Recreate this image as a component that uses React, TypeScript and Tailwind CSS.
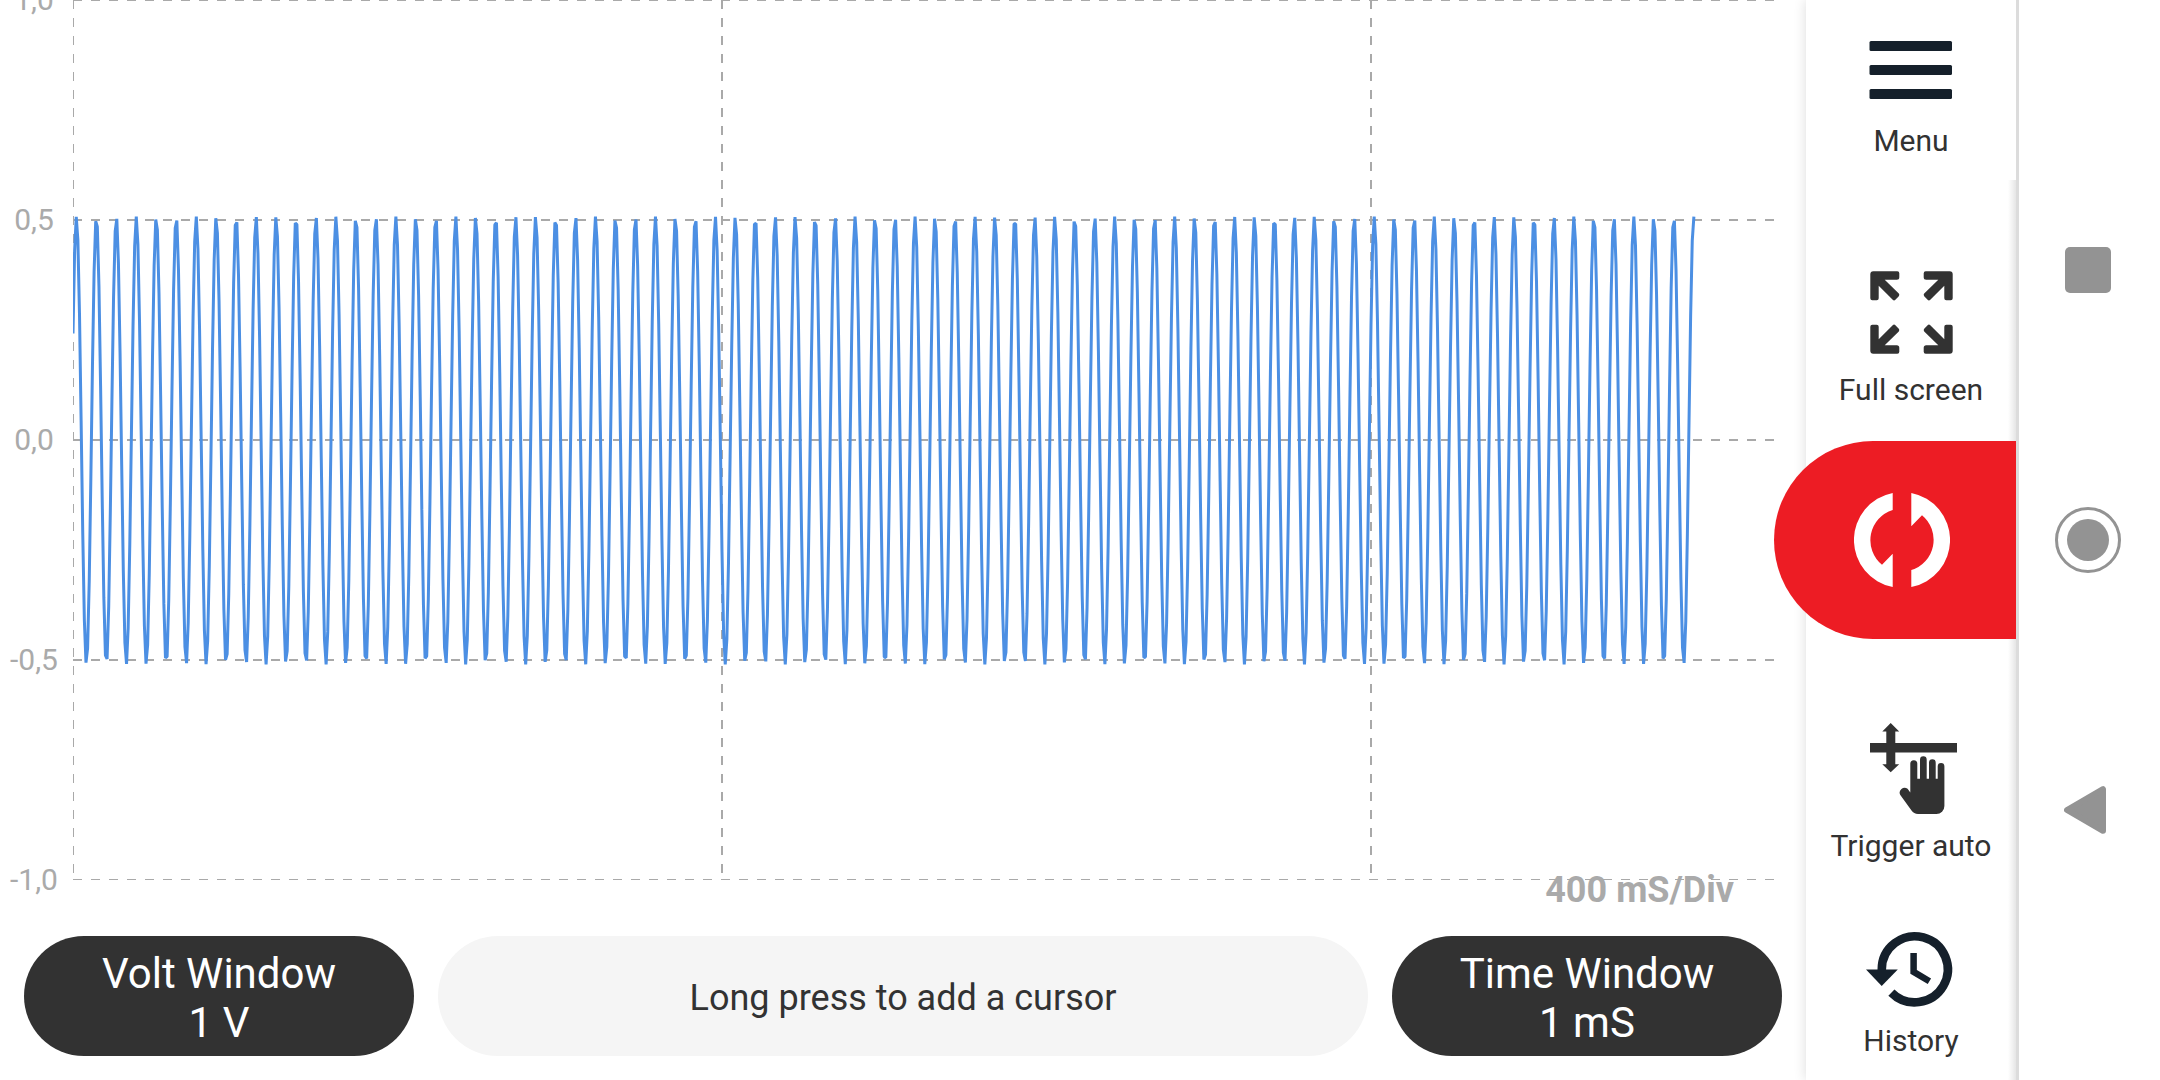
import React from "react";

const MAX_SAMPLES = 1000;
const SAMPLE_STEP = 649 / 400;
const SIGNAL_PERIOD = 12.3064;
const SIGNAL_DELAY = 2.1;
const AMPLITUDE = 224;
const MID_Y = 440.5;

const voltLabels = [
  { text: "1,0", y: 0 },
  { text: "0,5", y: 220 },
  { text: "0,0", y: 440 },
  { text: "-0,5", y: 660 },
  { text: "-1,0", y: 880 },
];

const timeLines = [0, 649, 1298];

const buildTrace = () => {
  const points: string[] = [];
  for (let i = 0; i < MAX_SAMPLES; i++) {
    const phase = (2 * Math.PI * (i - SIGNAL_DELAY)) / SIGNAL_PERIOD;
    const x = i * SAMPLE_STEP;
    const y = MID_Y - AMPLITUDE * Math.cos(phase);
    points.push(`${x.toFixed(2)},${y.toFixed(2)}`);
  }
  return points.join(" ");
};

const trace = buildTrace();

const Chart: React.FC = () => (
  <svg
    viewBox="0 0 1806 880"
    className="block w-full overflow-visible"
    role="img"
    aria-label="Oscilloscope trace"
  >
    {voltLabels.map((label) => (
      <text
        key={label.text}
        x="34"
        y={label.y + 10}
        textAnchor="middle"
        fontSize="30"
        fill="#aaaaaa"
      >
        {label.text}
      </text>
    ))}
    {/* nested svg clips the grid and the trace to the plot area */}
    <svg x="73" y="0" width="1701" height="880" overflow="hidden">
      <g stroke="#a9a9a9" strokeWidth="2" strokeDasharray="9 9">
        {voltLabels.map((label) => (
          <line key={label.y} x1="0" x2="1701" y1={label.y} y2={label.y} />
        ))}
        {timeLines.map((x) => (
          <line key={x} x1={x} x2={x} y1="0" y2="880" />
        ))}
      </g>
      <polyline
        points={trace}
        fill="none"
        stroke="#4c8fe3"
        strokeWidth="3"
        strokeLinejoin="bevel"
      />
    </svg>
  </svg>
);

const MenuIcon = () => (
  <svg viewBox="0 0 100 100" className="size-[100px]" fill="#15202b">
    <rect x="8.5" y="24" width="82.5" height="10" rx="1.5" />
    <rect x="8.5" y="48" width="82.5" height="10" rx="1.5" />
    <rect x="8.5" y="72" width="82.5" height="10" rx="1.5" />
  </svg>
);

const CORNER_ARROW =
  "M12.3 5.3H36.3a2 2 0 0 1 2 2V11.3a2.5 2.5 0 0 1-2.5 2.5H23.7L37.8 27.6a2 2 0 0 1 0 2.6L34.4 33.8a2 2 0 0 1-2.7 0L17.7 19.8V32.3a2 2 0 0 1-2 2H11.3a2 2 0 0 1-2-2V8.3a3 3 0 0 1 3-3Z";

const FullScreenIcon = () => (
  <svg viewBox="0 0 100 100" className="size-[100px]" fill="#323232">
    <path d={CORNER_ARROW} />
    <path d={CORNER_ARROW} transform="matrix(-1 0 0 1 101 0)" />
    <path d={CORNER_ARROW} transform="matrix(1 0 0 -1 0 93)" />
    <path d={CORNER_ARROW} transform="matrix(-1 0 0 -1 101 93)" />
  </svg>
);

const TriggerIcon = () => (
  <svg viewBox="0 0 100 100" className="size-[100px]" fill="#323232">
    <rect x="9" y="21" width="87" height="9.5" />
    <path d="M29.7 1L38.2 9.4H34.3V42.3H38.2L29.7 50.3L21.3 42.3H25.3V9.4H21.3Z" />
    <path d="M49.3 70.5V41.8a3.5 3.5 0 0 1 7 0V56.7H59V37.7a3.35 3.35 0 0 1 6.7 0V56.7H68V40.7a3.35 3.35 0 0 1 6.7 0V56.7H76.7V44.4a3.35 3.35 0 0 1 6.7 0V84a8 8 0 0 1-8 8H57a8 8 0 0 1-6.5-3.5L39.3 73a4.9 4.9 0 0 1 7.3-6.2Z" />
  </svg>
);

const HistoryIcon = () => (
  <svg viewBox="0 0 100 100" className="size-[100px]">
    <g fill="none" stroke="#15202b">
      <path d="M20.8 54V52.3A33 33 0 1 1 30.4 75.6" strokeWidth="8.6" />
      <path d="M52.6 36V54.8L68.4 64.2" strokeWidth="6.5" />
    </g>
    <path d="M5 52.5H36.8L20.7 69Z" fill="#15202b" />
  </svg>
);

const RUN_HALF =
  "M38.7 0.9A48 48 0 0 0 38.7 95.1V61.8L28 72.7A31.7 31.7 0 0 1 38.7 17.9Z";

const RunIcon = () => (
  <svg viewBox="0 0 96 96" className="size-24" fill="#ffffff">
    <path d={RUN_HALF} />
    <path d={RUN_HALF} transform="rotate(180 48 48)" />
  </svg>
);

interface ToolButtonProps {
  label: string;
  className?: string;
  children: React.ReactNode;
}

const ToolButton: React.FC<ToolButtonProps> = ({
  label,
  className = "",
  children,
}) => (
  <button
    type="button"
    className={`flex w-full flex-col items-center gap-1.5 text-[30px] leading-9 text-[#323232] ${className}`}
  >
    {children}
    <span>{label}</span>
  </button>
);

interface WindowButtonProps {
  title: string;
  value: string;
}

const WindowButton: React.FC<WindowButtonProps> = ({ title, value }) => (
  <button
    type="button"
    className="flex h-[120px] w-[390px] shrink-0 flex-col items-center justify-center rounded-full bg-[#323232] pt-1 text-[42px] leading-[49px] text-white"
  >
    <span>{title}</span>
    <span>{value}</span>
  </button>
);

const NavButton: React.FC<{ label: string; children: React.ReactNode }> = ({
  label,
  children,
}) => (
  <button
    type="button"
    aria-label={label}
    className="flex h-[270px] w-full items-center justify-center"
  >
    {children}
  </button>
);

const App: React.FC = () => {
  return (
    <div className="flex min-h-screen overflow-hidden bg-white font-[Roboto,sans-serif]">
      <main className="flex min-w-0 flex-1 flex-col">
        <div className="relative">
          <Chart />
          <div className="absolute right-[72px] bottom-[-31px] text-[36px] leading-[42px] font-bold text-[#aaaaaa]">
            400 mS/Div
          </div>
        </div>
        <div className="mt-14 flex gap-6 px-6 pb-6">
          <WindowButton title="Volt Window" value="1 V" />
          <button
            type="button"
            className="h-[120px] flex-1 rounded-full bg-[#f5f5f5] pt-1 text-[36px] leading-[42px] text-[#323232]"
          >
            Long press to add a cursor
          </button>
          <WindowButton title="Time Window" value="1 mS" />
        </div>
      </main>

      <aside className="relative w-[210px] shrink-0 bg-white pt-[17px] shadow-[0_0_12px_rgba(0,0,0,0.14)]">
        {/* shade along the right edge, below the menu button */}
        <div className="absolute top-[180px] right-0 bottom-0 w-2 bg-linear-to-r from-transparent to-black/10" />
        <ToolButton label="Menu" className="mb-[107px]">
          <MenuIcon />
        </ToolButton>
        <ToolButton label="Full screen" className="mb-[33px]">
          <FullScreenIcon />
        </ToolButton>
        <button
          type="button"
          aria-label="Run"
          className="relative -ml-8 mb-[83px] flex h-[198px] w-[242px] items-center rounded-l-full bg-[#ed1c24] pl-20"
        >
          <RunIcon />
        </button>
        <ToolButton label="Trigger auto" className="mb-[53px]">
          <TriggerIcon />
        </ToolButton>
        <ToolButton label="History">
          <HistoryIcon />
        </ToolButton>
      </aside>

      <nav className="relative flex w-36 shrink-0 flex-col justify-center border-l-3 border-[#dcdcdc] bg-white pr-[3px]">
        <NavButton label="Recent apps">
          <svg viewBox="0 0 46 46" className="size-[46px]">
            <rect width="46" height="46" rx="5" fill="#939393" />
          </svg>
        </NavButton>
        <NavButton label="Home">
          <svg viewBox="0 0 66 66" className="size-[66px]">
            <circle
              cx="33"
              cy="33"
              r="31.5"
              fill="none"
              stroke="#939393"
              strokeWidth="3"
            />
            <circle cx="33" cy="33" r="21" fill="#939393" />
          </svg>
        </NavButton>
        <NavButton label="Back">
          <svg viewBox="0 0 48 48" className="size-12">
            <path
              d="M3 24L39 3.2V44.8Z"
              fill="#939393"
              stroke="#939393"
              strokeWidth="6"
              strokeLinejoin="round"
            />
          </svg>
        </NavButton>
      </nav>
    </div>
  );
};

export default App;
